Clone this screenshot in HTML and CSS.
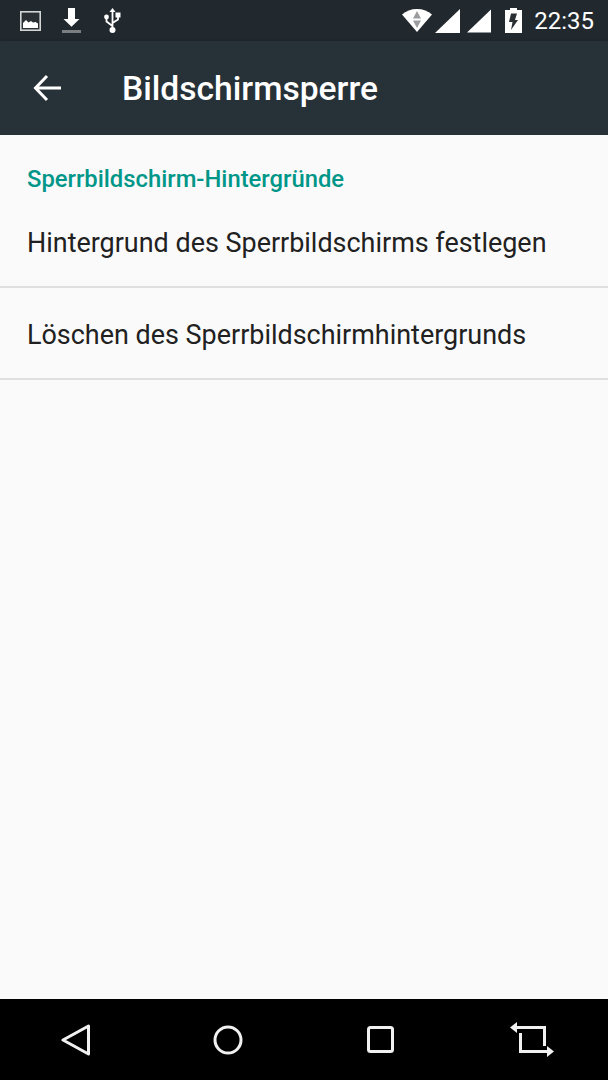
FILE: index.html
```html
<!DOCTYPE html>
<html lang="de">
<head>
    <meta charset="UTF-8">
    <meta name="viewport" content="width=device-width, initial-scale=1.0">
    <title>Bildschirmsperre</title>
    <link rel="stylesheet" href="styles.css">
</head>
<body>
    <div class="screen">
        <div class="status-bar">
            <div class="status-left">
                <svg width="21" height="20" viewBox="0 0 21 20">
                    <rect x="0.8" y="0.8" width="19.400" height="18.400" fill="#2a2f33" stroke="#d4d6d6" stroke-width="1.6"/>
                    <path d="M3 17v-5l3-3 2.500 2.500 2.500-1.500 2 1.500 2.500-.5 2.500 1.500V17z" fill="#fff"/>
                </svg>
                <svg width="19" height="25" viewBox="0 0 19 25">
                    <path d="M6 0h7v11h4.500l-8 7.700-8-7.700H6z" fill="#fff"/>
                    <rect x="0" y="22" width="19" height="3" fill="#7b7e80"/>
                </svg>
                <svg class="icon-usb" width="17" height="25" viewBox="0 0 17 25">
                    <path d="M8.500 2v20M8.500 18 2.500 13.500V9.500M8.500 15l5.500-3.500V9" fill="none" stroke="#fff" stroke-width="1.800"/>
                    <path d="M8.500 0l3 4h-6z" fill="#fff"/>
                    <circle cx="2.500" cy="9" r="2.400" fill="#fff"/>
                    <rect x="11.500" y="4.500" width="5" height="5" fill="#fff"/>
                    <circle cx="8.500" cy="22" r="3" fill="#fff"/>
                </svg>
            </div>
            <div class="status-right">
                <svg width="30" height="23" viewBox="0 0 30 23">
                    <path d="M0 5.500C4 2 9 0 15 0s11 2 15 5.500L15 23z" fill="#fff"/>
                    <path d="M15 2l4 7.500h-8zM15 19l4-7.500h-8z" fill="#9a9c9d"/>
                </svg>
                <svg class="icon-signal" width="25" height="24" viewBox="0 0 25 24">
                    <path d="M25 0v24H0z" fill="#fff"/>
                </svg>
                <svg class="icon-signal" width="24" height="24" viewBox="0 0 25 24">
                    <path d="M25 0v24H0z" fill="#fff"/>
                </svg>
                <svg class="icon-battery" width="17" height="25" viewBox="0 0 17 25">
                    <path d="M5 0h7v2h5v23H0V2h5z" fill="#fff"/>
                    <path d="M6 5.500h6L10 12h3L6 22l1.500-8H4z" fill="#2a2f33"/>
                </svg>
                <span class="clock">22:35</span>
            </div>
        </div>

        <div class="app-bar">
            <svg width="30" height="28" viewBox="0 0 30 28">
                <path d="M28 14H3M14 2 2.500 14 14 26" fill="none" stroke="#fff" stroke-width="3"/>
            </svg>
            <h1>Bildschirmsperre</h1>
        </div>

        <div class="content">
            <div class="section-title">Sperrbildschirm-Hintergründe</div>
            <div class="row row-first">Hintergrund des Sperrbildschirms festlegen</div>
            <div class="row">Löschen des Sperrbildschirmhintergrunds</div>
        </div>

        <div class="nav-bar">
            <svg width="30" height="32" viewBox="0 0 30 32">
                <path d="M27.500 2v28L2 16z" fill="none" stroke="#f1f1f1" stroke-width="3" stroke-linejoin="round"/>
            </svg>
            <svg width="30" height="30" viewBox="0 0 30 30">
                <circle cx="15" cy="15" r="13" fill="none" stroke="#f1f1f1" stroke-width="3"/>
            </svg>
            <svg width="27" height="27" viewBox="0 0 27 27">
                <rect x="1.500" y="1.500" width="24" height="24" rx="2" fill="none" stroke="#f1f1f1" stroke-width="3"/>
            </svg>
            <svg width="46" height="36" viewBox="0 0 46 36">
                <path d="M8 5.500h27.500V24" fill="none" stroke="#f1f1f1" stroke-width="3"/>
                <path d="M11.500 11v18.500H38" fill="none" stroke="#f1f1f1" stroke-width="3"/>
                <path d="M1 5.500 8 0v11zM45 29.500 38 24v11z" fill="#f1f1f1"/>
            </svg>
        </div>
    </div>
</body>
</html>
```

FILE: styles.css
```css
body {
    margin: 0;
    font-family: Roboto, Arial, sans-serif;
    background-color: #fafafa;
}

.screen {
    display: flex;
    flex-direction: column;
    width: 608px;
    height: 1080px;
    overflow: hidden;
}

.status-bar {
    display: flex;
    justify-content: space-between;
    align-items: center;
    height: 41px;
    padding: 0 14px 0 20px;
    background-color: #22292e;
    box-sizing: border-box;
}

.status-left {
    display: flex;
    align-items: center;
    gap: 21px;
}

.icon-usb {
    margin-left: 2px;
}

.status-right {
    display: flex;
    align-items: center;
    color: #fff;
}

.icon-signal {
    margin-left: 3px;
}

.icon-signal + .icon-signal {
    margin-left: 7px;
}

.icon-battery {
    margin-left: 14px;
}

.clock {
    margin-left: 12px;
    font-size: 24px;
    line-height: 28px;
}

.app-bar {
    display: flex;
    align-items: center;
    gap: 59px;
    height: 94px;
    padding-left: 33px;
    background-color: #263238;
    box-shadow: 0 1px 4px rgba(0, 0, 0, 0.45);
    box-sizing: border-box;
}

h1 {
    margin: 0;
    color: #fff;
    font-size: 33.600px;
    font-weight: 500;
}

.content {
    flex: 1;
    background-color: #fafafa;
}

.section-title {
    padding: 30px 27px 0;
    color: #009688;
    font-size: 23.800px;
    font-weight: 500;
    line-height: 28px;
}

.row {
    display: flex;
    align-items: center;
    height: 92px;
    padding: 4px 27px 0;
    border-bottom: 2px solid #dfdfdf;
    color: #212121;
    font-size: 26.950px;
    box-sizing: border-box;
}

.row-first {
    height: 95px;
    padding-top: 7px;
}

.nav-bar {
    display: grid;
    grid-template-columns: repeat(4, 152px);
    justify-items: center;
    align-items: center;
    height: 81px;
    background-color: #000;
    box-sizing: border-box;
}
```
